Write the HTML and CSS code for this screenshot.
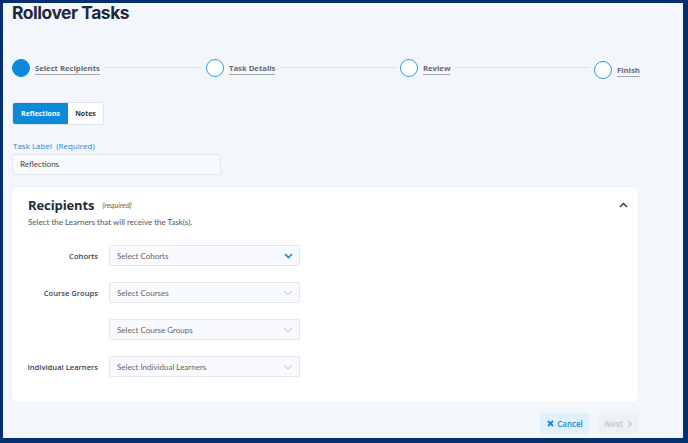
FILE: index.html
```html
<!DOCTYPE html>
<html>
<head>
<meta charset="utf-8">
<link rel="stylesheet" href="styles.css">
</head>
<body>
<div class="frame">
  <h1 class="title">Rollover Tasks</h1>
  <div class="stepper">
    <div class="step active"><span class="dot"></span><span class="step-label">Select Recipients</span><span class="line"></span></div>
    <div class="step"><span class="dot"></span><span class="step-label">Task Details</span><span class="line"></span></div>
    <div class="step"><span class="dot"></span><span class="step-label">Review</span><span class="line"></span></div>
    <div class="step last"><span class="dot"></span><span class="step-label">Finish</span></div>
  </div>
  <div class="tabs">
    <button class="tab on">Reflections</button>
    <button class="tab">Notes</button>
  </div>
  <label class="field-label">Task Label&nbsp; (Required)</label>
  <div class="text-input">Reflections</div>
  <section class="card">
    <div class="card-head">
      <h2 class="card-title">Recipients</h2>
      <span class="req">(required)</span>
      <svg class="collapse" width="9" height="6" viewBox="0 0 9 6"><path d="M1 5 L4.5 1.5 L8 5" fill="none" stroke="#3b4a5a" stroke-width="1.6"/></svg>
    </div>
    <p class="card-sub">Select the Learners that will receive the Task(s).</p>
    <div class="rows">
      <div class="row"><span class="row-label">Cohorts</span><div class="select">Select Cohorts<svg class="chev" width="9" height="6" viewBox="0 0 9 6"><path d="M1 1 L4.5 4.5 L8 1" fill="none" stroke="#1a8ad6" stroke-width="1.6"/></svg></div></div>
      <div class="row"><span class="row-label">Course Groups</span><div class="select">Select Courses<svg class="chev" width="10" height="6" viewBox="0 0 10 6"><path d="M1 1 L5 5 L9 1" fill="none" stroke="#b8bec6" stroke-width="1"/></svg></div></div>
      <div class="row"><span class="row-label"></span><div class="select">Select Course Groups<svg class="chev" width="10" height="6" viewBox="0 0 10 6"><path d="M1 1 L5 5 L9 1" fill="none" stroke="#b8bec6" stroke-width="1"/></svg></div></div>
      <div class="row"><span class="row-label">Individual Learners</span><div class="select">Select Individual Learners<svg class="chev" width="10" height="6" viewBox="0 0 10 6"><path d="M1 1 L5 5 L9 1" fill="none" stroke="#b8bec6" stroke-width="1"/></svg></div></div>
    </div>
  </section>
  <div class="actions">
    <button class="btn cancel"><svg width="7" height="7" viewBox="0 0 7 7"><path d="M1 1 L6 6 M6 1 L1 6" stroke="#1a8ad6" stroke-width="1.8"/></svg>Cancel</button>
    <button class="btn next">Next<svg width="5" height="8" viewBox="0 0 5 8"><path d="M1 1 L4 4 L1 7" fill="none" stroke="#c3c8ce" stroke-width="1.2"/></svg></button>
  </div>
</div>
</body>
</html>
```
FILE: styles.css
```css
* { box-sizing: border-box; }
html, body { margin: 0; padding: 0; }
body { width: 688px; height: 443px; overflow: hidden; background: #052f6e; }
.frame {
  margin: 3px 5px 0 3px;
  height: 435px;
  background: #f3f6fa;
  padding: 0 0 0 9px;
  font-family: "Open Sans", "Liberation Sans", sans-serif;
  color: #333;
}
.title {
  margin: 0;
  font-family: Inter, "Liberation Sans", sans-serif;
  font-size: 17.5px;
  line-height: 19px;
  font-weight: 700;
  color: #1d2b3a;
  letter-spacing: -0.5px;
}
.stepper {
  display: grid;
  grid-template-columns: 194px 194px 194px auto;
  align-items: center;
  margin-top: 34px;
  width: 626px;
  height: 20px;
}
.step { display: flex; align-items: center; gap: 5px; }
.dot {
  flex: none;
  width: 18px; height: 18px; border-radius: 50%;
  border: 1.5px solid #2a9be0; background: #fff;
}
.active .dot { background: #0a8ad8; border-color: #0a8ad8; }
.step-label {
  font-size: 7.7px; font-weight: 700; color: #666b72;
  border-bottom: 1.5px solid #a3a8ae; padding-bottom: 1px; line-height: 10px;
  margin-top: 2px; white-space: nowrap;
}
.last { margin-top: 5px; }
.line { flex: 1; height: 1px; background: #dde0e4; margin: 0 4px 0 0; }
.tabs {
  display: flex; margin-top: 26px; width: 92px; height: 23px;
  border: 1px solid #dfe4ea; border-radius: 3px; overflow: hidden; background: #fff;
}
.tab {
  border: 0; font-family: inherit; font-size: 7px; font-weight: 700; padding: 0; cursor: pointer;
  background: #fff; color: #333;
}
.tab.on { background: #0a8ad8; color: #fff; width: 55px; }
.tab:not(.on) { flex: 1; }
.field-label {
  display: block; margin-top: 15px; font-size: 8px; color: #1a8ad6; line-height: 11px; padding-left: 1px;
}
.text-input {
  margin-top: 3px; width: 209px; height: 21px; background: #f8fafd;
  border: 1px solid #e2e7ed; border-radius: 2px; font-size: 8px; line-height: 19px;
  padding-left: 7px; color: #444; font-family: Lato, "Liberation Sans", sans-serif;
}
.card {
  margin-top: 12px; width: 626px; height: 215px; background: #fff; border-radius: 5px;
  box-shadow: 0 0 2px rgba(0,0,0,0.06); padding: 10px 10px 0 16px;
}
.card-head { display: flex; align-items: center; height: 16px; }
.card-title { margin: 0; font-size: 13px; font-weight: 700; color: #1d2b3a; line-height: 16px; letter-spacing: -0.1px; }
.req { font-size: 7.5px; font-style: italic; color: #666; margin-left: 8px; font-family: Lato, sans-serif; }
.collapse { margin-left: auto; margin-right: 0; }
.card-sub { margin: 3px 0 0 0; font-size: 8px; color: #555; font-family: Lato, "Liberation Sans", sans-serif; line-height: 12px; }
.rows { margin-top: 17px; display: flex; flex-direction: column; gap: 16px; }
.row { display: flex; align-items: center; }
.row-label { flex: none; width: 73px; margin-left: -3px; text-align: right; font-size: 7.6px; font-weight: 600; color: #3a4550; white-space: nowrap; }
.select {
  margin-left: 11px; width: 191px; height: 21px; display: flex; align-items: center; justify-content: space-between;
  background: #f8fafd; border: 1px solid #e2e7ed; border-radius: 2px; padding: 0 6px 0 7px;
  font-size: 8px; color: #666; font-family: Lato, "Liberation Sans", sans-serif;
}
.actions { display: flex; justify-content: flex-end; width: 626px; margin-top: 11px; gap: 9px; }
.btn {
  border: 0; font-family: inherit; font-size: 8px; font-weight: 600; height: 21px; border-radius: 2px;
  display: flex; align-items: center; gap: 3px; padding: 0; justify-content: center;
}
.cancel { width: 50px; background: #e0f1fc; color: #1a8ad6; }
.next { width: 39px; background: #edf0f4; color: #c3c8ce; gap: 4px; }
```
